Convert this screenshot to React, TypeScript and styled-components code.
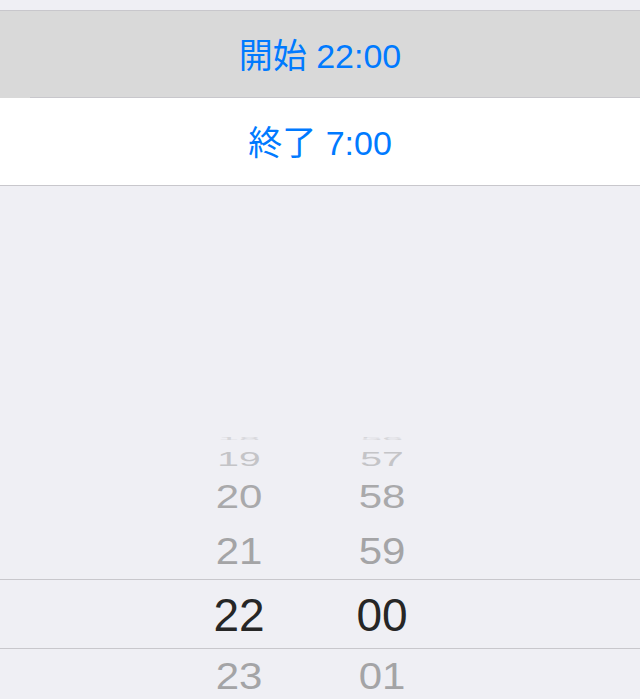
import React from "react"
import styled, { createGlobalStyle } from "styled-components"

const GlobalStyle = createGlobalStyle`
  html, body {
    margin: 0;
    padding: 0;
    background: #efeff4;
  }
  body {
    font-family: "Liberation Sans", "Noto Sans CJK JP", sans-serif;
    overflow: hidden;
  }
`

const Screen = styled.div`
  width: 640px;
  height: 699px;
  overflow: hidden;
  background: #efeff4;
  padding-top: 10px;
  box-sizing: border-box;
`

const Group = styled.div`
  border-top: 1px solid #c8c7cc;
  border-bottom: 1px solid #c8c7cc;
`

const Cell = styled.div<{ $selected?: boolean; $last?: boolean }>`
  position: relative;
  height: 87px;
  display: flex;
  align-items: center;
  justify-content: center;
  padding-top: 2px;
  box-sizing: border-box;
  background: ${(p) => (p.$selected ? "#d9d9d9" : "#ffffff")};
  color: #007aff;
  font-size: 34px;
  line-height: 1;
  font-family: "Liberation Sans", "Noto Sans CJK JP", sans-serif;

  ${(p) =>
    !p.$last &&
    `
    &::after {
      content: "";
      position: absolute;
      left: 30px;
      right: 0;
      bottom: 0;
      height: 1px;
      background: #c8c7cc;
    }
  `}
`

const Picker = styled.div`
  padding-top: 243px;
`

const Columns = styled.div`
  display: grid;
  grid-template-columns: 80px 80px;
  column-gap: 63px;
  padding-left: 199px;
  align-items: center;
  align-content: center;
`

const Slot = styled(Columns)<{ $h: number }>`
  height: ${(p) => p.$h}px;
`

const Band = styled(Columns)`
  height: 68px;
  border-top: 1px solid #c8c7cc;
  border-bottom: 1px solid #c8c7cc;
`

const Digit = styled.span<{ $color: string }>`
  display: block;
  text-align: center;
  font-size: 42px;
  line-height: 1;
  color: ${(p) => p.$color};
  transform-origin: center center;
`

const Current = styled.span`
  display: block;
  text-align: center;
  font-size: 46px;
  line-height: 1;
  color: #262626;
  padding-top: 2px;
`

type Row = { h: string; m: string; slot: number; sy: number; sx: number; dy: number; color: string }

const above: Row[] = [
  { h: "18", m: "56", slot: 20, sy: 0.1, sx: 0.9, dy: 0, color: "#d6d6da" },
  { h: "19", m: "57", slot: 28, sy: 0.47, sx: 0.93, dy: -4, color: "#c4c4c7" },
  { h: "20", m: "58", slot: 46, sy: 0.77, sx: 1, dy: -3, color: "#a9a9ab" },
  { h: "21", m: "59", slot: 56, sy: 0.9, sx: 1, dy: 0, color: "#a4a4a6" },
]

const below: Row[] = [{ h: "23", m: "01", slot: 53, sy: 0.9, sx: 1, dy: 0, color: "#a4a4a6" }]

const WheelRow = ({ row }: { row: Row }) => {
  const t = { transform: `translateY(${row.dy}px) scale(${row.sx}, ${row.sy})` }
  return (
    <Slot $h={row.slot}>
      <Digit $color={row.color} style={t}>
        {row.h}
      </Digit>
      <Digit $color={row.color} style={t}>
        {row.m}
      </Digit>
    </Slot>
  )
}

export default function App() {
  return (
    <Screen>
      <GlobalStyle />
      <Group>
        <Cell $selected>開始 22:00</Cell>
        <Cell $last>終了 7:00</Cell>
      </Group>
      <Picker>
        {above.map((r) => (
          <WheelRow key={r.h} row={r} />
        ))}
        <Band>
          <Current>22</Current>
          <Current>00</Current>
        </Band>
        {below.map((r) => (
          <WheelRow key={r.h} row={r} />
        ))}
      </Picker>
    </Screen>
  )
}
